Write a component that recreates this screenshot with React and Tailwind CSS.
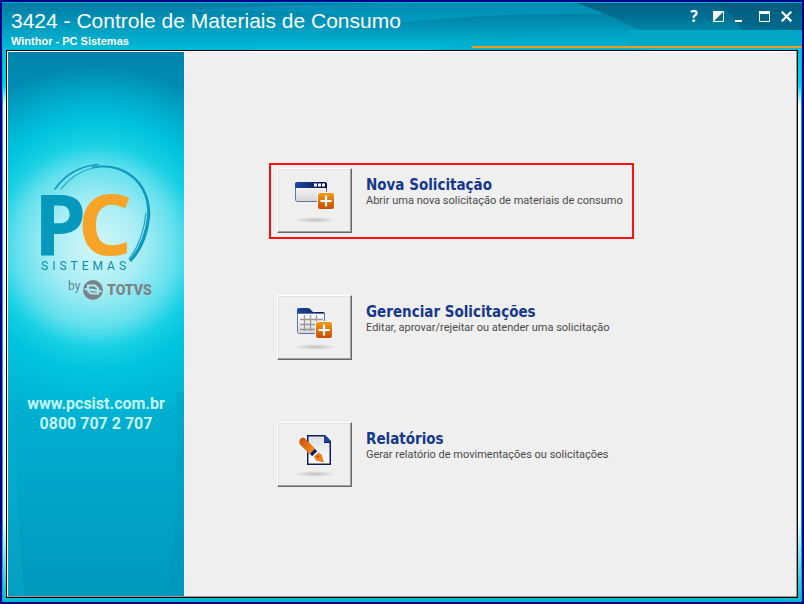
import React from "react";

const menuItems = [
  {
    title: "Nova Solicitação",
    description: "Abrir uma nova solicitação de materiais de consumo",
    Icon: NewRequestIcon,
    highlighted: true,
  },
  {
    title: "Gerenciar Solicitações",
    description: "Editar, aprovar/rejeitar ou atender uma solicitação",
    Icon: ManageRequestsIcon,
  },
  {
    title: "Relatórios",
    description: "Gerar relatório de movimentações ou solicitações",
    Icon: ReportsIcon,
  },
];

function IconDefs() {
  return (
    <svg width="0" height="0" className="absolute" aria-hidden="true">
      <defs>
        <linearGradient id="orange" x1="0" y1="0" x2="0" y2="1">
          <stop offset="0" stopColor="#f59a1c" />
          <stop offset="1" stopColor="#cc4a00" />
        </linearGradient>
        <linearGradient id="navy" x1="0" y1="0" x2="1" y2="0">
          <stop offset="0" stopColor="#1f4aa0" />
          <stop offset="1" stopColor="#06104f" />
        </linearGradient>
        <linearGradient id="paper" x1="0" y1="0" x2="0" y2="1">
          <stop offset="0" stopColor="#dcdfe2" />
          <stop offset="1" stopColor="#ffffff" />
        </linearGradient>
        <linearGradient id="pane" x1="0" y1="0" x2="0" y2="1">
          <stop offset="0" stopColor="#ffffff" />
          <stop offset="1" stopColor="#d6d6d6" />
        </linearGradient>
        <linearGradient id="pen" x1="0" y1="0" x2="1" y2="1">
          <stop offset="0" stopColor="#cc4a0a" />
          <stop offset="1" stopColor="#f79a1e" />
        </linearGradient>
        <radialGradient id="shadow">
          <stop offset="0" stopColor="#000" stopOpacity="0.2" />
          <stop offset="1" stopColor="#000" stopOpacity="0" />
        </radialGradient>
        <linearGradient id="wave" x1="0" y1="0" x2="0" y2="1">
          <stop offset="0" stopColor="#0081a4" />
          <stop offset="0.350" stopColor="#0093b6" />
          <stop offset="1" stopColor="#00bfdb" />
        </linearGradient>
        <linearGradient id="corner" x1="0" y1="0" x2="0" y2="1">
          <stop offset="0" stopColor="#00577a" />
          <stop offset="1" stopColor="#0085a6" />
        </linearGradient>
      </defs>
    </svg>
  );
}

function PlusBadge({ x, y }) {
  return (
    <g transform={`translate(${x} ${y})`}>
      <rect width="18" height="18" rx="3" fill="#fbf6f0" />
      <rect x="1" y="1" width="16" height="16" rx="2" fill="url(#orange)" />
      <path d="M9 3.500v11M3.500 9h11" stroke="#fff" strokeWidth="2.200" />
    </g>
  );
}

function NewRequestIcon() {
  return (
    <svg width="72" height="62" viewBox="0 0 72 62" aria-hidden="true">
      <ellipse cx="37" cy="50" rx="21" ry="3" fill="url(#shadow)" />
      <rect x="17.500" y="12.500" width="31" height="19" rx="2" fill="url(#pane)" stroke="#5d73ad" />
      <path d="M17 18v-4a2 2 0 0 1 2-2h28a2 2 0 0 1 2 2v4z" fill="url(#navy)" />
      <path d="M36 13.500h3v3h-3zM40 13.500h3v3h-3zM44 13.500h3v3h-3z" fill="#fff" />
      <PlusBadge x={39} y={22} />
    </svg>
  );
}

function ManageRequestsIcon() {
  return (
    <svg width="72" height="62" viewBox="0 0 72 62" aria-hidden="true">
      <ellipse cx="37" cy="50" rx="21" ry="3" fill="url(#shadow)" />
      <path d="M19 18v-5a2 2 0 0 1 2-2h9q2 0 3.500 2.500T37 15h8a2 2 0 0 1 2 2v2z" fill="url(#navy)" />
      <path d="M19.500 16.500h27v18a2 2 0 0 1-2 2h-23a2 2 0 0 1-2-2z" fill="url(#pane)" stroke="#5d73ad" />
      <path d="M22 22.500h23M22 27.500h23M22 32.500h23M26.500 18v16M32.500 18v16M38.500 18v16" stroke="#999" strokeWidth="1.300" />
      <PlusBadge x={37} y={24} />
    </svg>
  );
}

function ReportsIcon() {
  return (
    <svg width="72" height="62" viewBox="0 0 72 62" aria-hidden="true">
      <ellipse cx="37" cy="50" rx="21" ry="3" fill="url(#shadow)" />
      <path d="M29 11h18l6 6v24H29z" fill="#101d60" />
      <path d="M30.500 12.500H46V19h5.500v20.500h-21z" fill="url(#paper)" />
      <path d="M46 11h1l6 7h-7z" fill="#1d3f9c" />
      <path d="M21.500 17.500a3.500 3.500 0 0 1 5-3.500l10.500 10.500-5.500 5.500-10-10z" fill="url(#pen)" />
      <path d="M33 31l5-5" stroke="#101d60" strokeWidth="3.200" />
      <path d="M36 32.500l4.500-4 3 2 2.500 8-8-2z" fill="#ef7d18" />
      <circle cx="40" cy="32.500" r="1" fill="#9c3c05" />
    </svg>
  );
}

function HeaderArt() {
  return (
    <svg
      className="absolute inset-0 h-full w-full"
      viewBox="0 0 798 47"
      preserveAspectRatio="none"
      aria-hidden="true"
    >
      <path d="M180 8Q300 0 420 0H798V47H250Q320 28 400 19Q300 5 180 8z" fill="#00b0d4" opacity="0.300" />
      <path d="M245 47Q320 25 400 19Q490 10 580 11Q700 12 798 26V47z" fill="url(#wave)" />
      <path d="M430 47Q560 18 640 30V47z" fill="#00a3c6" opacity="0.300" />
      <path d="M573 0Q605 10 636 28H798V0z" fill="url(#corner)" opacity="0.850" />
      <path d="M573 0L603 12Q700 12 790 27H798V20Q690 7 590 5z" fill="#006a8c" opacity="0.400" />
      <path d="M711 0Q730 9 738 28H798V0z" fill="#005575" opacity="0.450" />
      <rect x="626" y="27" width="172" height="16" fill="#02a7c7" />
    </svg>
  );
}

function WindowControls() {
  return (
    <div className="relative mt-[3px] mr-1.5 flex items-start text-white">
      <button type="button" aria-label="Ajuda" className="h-5 w-7 font-['Noto_Sans'] text-base leading-5 font-bold">
        ?
      </button>
      <button type="button" aria-label="Alternar tema" className="flex h-5 w-5 items-center justify-center">
        <svg width="11" height="11" viewBox="0 0 11 11">
          <path d="M0.500 0.500h10v10h-10z" fill="none" stroke="currentColor" />
          <path d="M0 0h11L0 11z" fill="currentColor" />
        </svg>
      </button>
      <button type="button" aria-label="Minimizar" className="flex h-5 w-6 items-center justify-center">
        <svg width="11" height="11" viewBox="0 0 11 11">
          <path d="M0 9h7v2H0z" fill="currentColor" />
        </svg>
      </button>
      <button type="button" aria-label="Maximizar" className="flex h-5 w-6 items-center justify-center">
        <svg width="11" height="11" viewBox="0 0 11 11">
          <path d="M0.500 0.500h10v10h-10z" fill="none" stroke="currentColor" />
          <path d="M0 0h11v3H0z" fill="currentColor" />
        </svg>
      </button>
      <button type="button" aria-label="Fechar" className="flex h-5 w-5 items-center justify-center">
        <svg width="11" height="11" viewBox="0 0 11 11">
          <path d="M0.700 0.700l9.600 9.600M10.300 0.700L0.700 10.300" stroke="currentColor" strokeWidth="2.200" />
        </svg>
      </button>
    </div>
  );
}

function Logo() {
  return (
    <svg width="128" height="144" viewBox="32 158 128 144" role="img" aria-label="PC Sistemas by Totvs">
      <g fill="none" strokeLinecap="round">
        <path d="M55 189C65 175 80 166 98 164.500" stroke="#0d93b8" strokeWidth="1.600" />
        <path d="M61 189C72 175 87 167.500 104 166.500" stroke="#2aa5c6" strokeWidth="1.200" />
      </g>
      <path d="M92 166.500C132 160 153 190 150 218Q147 246 131 262L129 260Q144 243 147 217C150 188 128 163 92 168z" fill="#0d98bd" />
      <path d="M146 213Q143 241 129 259" fill="none" stroke="#2aa5c6" strokeWidth="1.300" />
      <text x="34" y="255" className="fill-[#0798bd] font-['Noto_Sans'] text-[84px] font-bold">P</text>
      <text x="78" y="255" className="fill-[#f6a528] font-['Noto_Sans'] text-[84px] font-bold">C</text>
      <text x="41" y="270" className="fill-[#0b8cae] font-['Roboto'] text-[12px] tracking-[4px]">SISTEMAS</text>
      <text x="68" y="290" className="fill-[#5f8791] font-['Roboto'] text-[12px]">by</text>
      <circle cx="93" cy="290" r="10" fill="#7c8388" />
      <path d="M88 285.500h7l3 3v5h-7l-3-3z" fill="none" stroke="#a9ecf4" strokeWidth="2" />
      <path d="M84.500 289l11 1.500M90.500 289.500l11 2" stroke="#a9ecf4" strokeWidth="1.800" />
      <text x="107" y="295" className="fill-[#7c8388] font-['Roboto'] text-[14px] font-black">TOTVS</text>
    </svg>
  );
}

function Sidebar() {
  return (
    <aside className="relative flex w-44 shrink-0 flex-col items-center overflow-hidden bg-linear-to-b from-[#0085ad] via-[#00b9d7] to-[#0099be]">
      <div className="absolute inset-0 bg-[radial-gradient(circle_at_88px_194px,#d3f7fa_0px,#a8edf4_45px,#62e0ed_80px,#18d0e4_102px,#00c3dd_125px,transparent_180px)]" />
      <svg className="absolute inset-0 h-full w-full" viewBox="0 0 176 544" preserveAspectRatio="none" aria-hidden="true">
        <path d="M8 300Q5 430 17 544H0V300z" fill="#20b8d2" opacity="0.200" />
        <path d="M168 340Q172 440 160 544H176V340z" fill="#0088b4" opacity="0.150" />
      </svg>
      <div className="relative mt-[106px]">
        <Logo />
      </div>
      <div className="relative mt-23 text-center font-['Roboto'] text-base leading-5 font-bold text-[#c4f5fb]">
        <a href="http://www.pcsist.com.br" className="block">
          www.pcsist.com.br
        </a>
        <p>0800 707 2 707</p>
      </div>
    </aside>
  );
}

function MenuItem({ title, description, Icon, highlighted }) {
  return (
    <li
      className={
        highlighted
          ? "flex w-[365px] border-2 border-[#ff1010] px-1.5 pt-[3px] pb-1"
          : "flex w-[365px] border-2 border-transparent px-1.5 pt-[3px] pb-1"
      }
    >
      <button
        type="button"
        aria-label={title}
        className="h-[65px] w-[75px] shrink-0 border border-t-white border-r-[#696969] border-b-[#696969] border-l-white bg-[#efefef] shadow-[inset_-1px_-1px_0_#a0a0a0,inset_1px_1px_0_#e3e3e3]"
      >
        <Icon />
      </button>
      <div className="ml-3.5 pt-[9px]">
        <h2 className="font-['DejaVu_Sans_Condensed','DejaVu_Sans'] text-[15px] leading-4 font-bold text-[#16388c]">
          {title}
        </h2>
        <p className="font-['Roboto'] text-[11px] leading-4 whitespace-nowrap text-[#4a4a4a]">{description}</p>
      </div>
    </li>
  );
}

export default function App() {
  return (
    <div className="flex min-h-screen flex-col border-2 border-[#00008b] bg-[#00b4cd]">
      <IconDefs />
      <header className="relative flex h-12 shrink-0 justify-between border-t border-[#00b0cc] bg-linear-to-b from-[#007ba3] to-[#00bcd8]">
        <HeaderArt />
        <div className="relative pt-1.5 pl-[9px] font-['Liberation_Sans'] text-white">
          <h1 className="text-[21px] leading-6">3424 - Controle de Materiais de Consumo</h1>
          <p className="text-[11px] leading-4 font-bold">Winthor - PC Sistemas</p>
        </div>
        <WindowControls />
        <div className="absolute right-0 bottom-0.5 left-[470px] h-0.5 bg-[#f09a1c]" />
      </header>
      <div className="flex flex-1 border-x border-b border-[#00b0c8] bg-[linear-gradient(to_bottom,#00c4dc_0px,#00d8ea_35px,#ffffff_55px,#ffffff_85%,#00b9cf_100%)] px-[3px] pb-[3px]">
        <div className="flex flex-1 border border-black">
          <div className="flex flex-1 border border-t-white border-r-[#999] border-b-[#999] border-l-white bg-[#efefef]">
            <Sidebar />
            <main className="flex-1 pt-[111px] pl-[85px]">
              <ul className="flex flex-col gap-[51px]">
                {menuItems.map((item) => (
                  <MenuItem key={item.title} {...item} />
                ))}
              </ul>
            </main>
          </div>
        </div>
      </div>
    </div>
  );
}
